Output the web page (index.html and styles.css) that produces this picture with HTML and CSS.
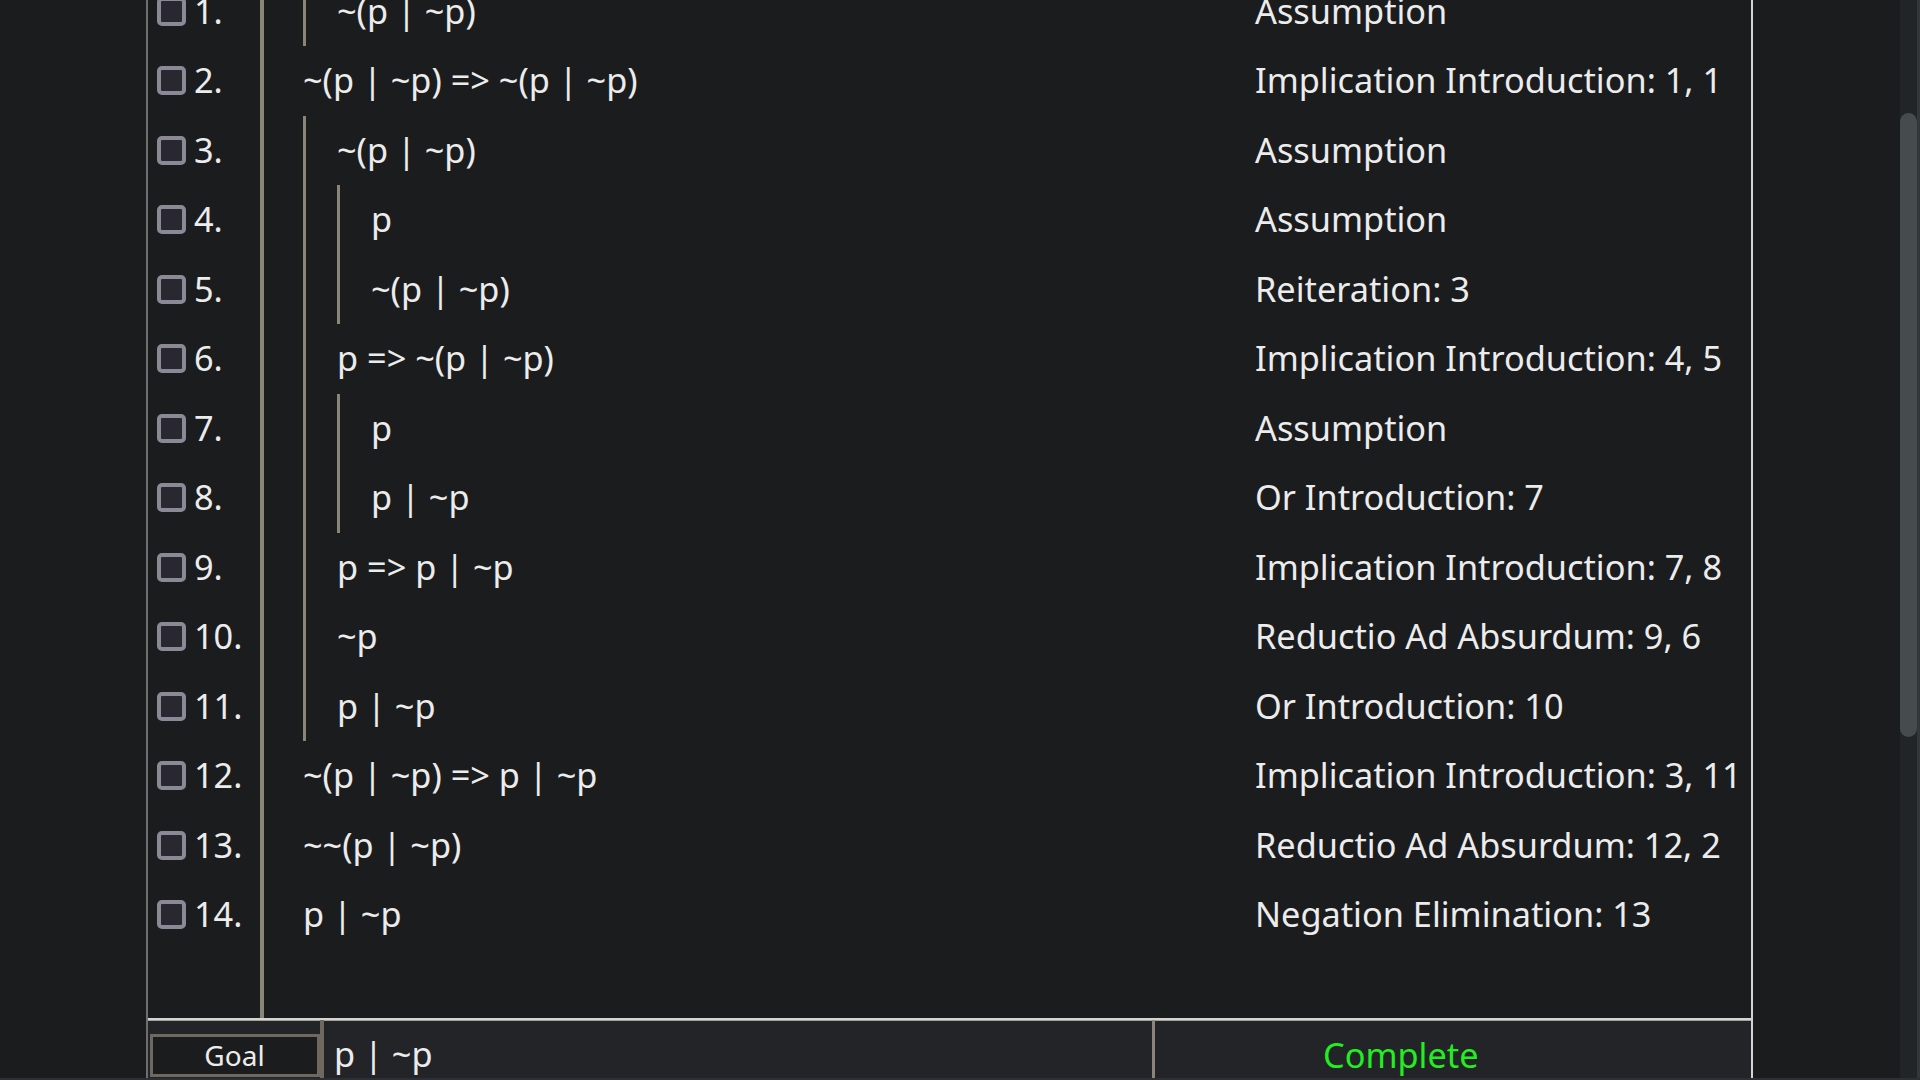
FILE: index.html
```html
<!DOCTYPE html>
<html lang="en">
<head>
<meta charset="utf-8">
<title>Proof</title>
<link rel="stylesheet" href="styles.css">
</head>
<body>
<div class="window">
  <div class="main">
    <div class="gutter"></div>
    <div class="panel">
      <div class="proof">
        <div class="row first">
          <div class="num"><span class="box"></span><span class="n">1.</span></div>
          <div class="formula"><div class="sub"><span class="f">~(p | ~p)</span></div></div>
          <div class="just"><span>Assumption</span></div>
        </div>
        <div class="row">
          <div class="num"><span class="box"></span><span class="n">2.</span></div>
          <div class="formula"><span class="f">~(p | ~p) =&gt; ~(p | ~p)</span></div>
          <div class="just"><span>Implication Introduction: 1, 1</span></div>
        </div>
        <div class="row">
          <div class="num"><span class="box"></span><span class="n">3.</span></div>
          <div class="formula"><div class="sub"><span class="f">~(p | ~p)</span></div></div>
          <div class="just"><span>Assumption</span></div>
        </div>
        <div class="row">
          <div class="num"><span class="box"></span><span class="n">4.</span></div>
          <div class="formula"><div class="sub"><div class="sub"><span class="f">p</span></div></div></div>
          <div class="just"><span>Assumption</span></div>
        </div>
        <div class="row">
          <div class="num"><span class="box"></span><span class="n">5.</span></div>
          <div class="formula"><div class="sub"><div class="sub"><span class="f">~(p | ~p)</span></div></div></div>
          <div class="just"><span>Reiteration: 3</span></div>
        </div>
        <div class="row">
          <div class="num"><span class="box"></span><span class="n">6.</span></div>
          <div class="formula"><div class="sub"><span class="f">p =&gt; ~(p | ~p)</span></div></div>
          <div class="just"><span>Implication Introduction: 4, 5</span></div>
        </div>
        <div class="row">
          <div class="num"><span class="box"></span><span class="n">7.</span></div>
          <div class="formula"><div class="sub"><div class="sub"><span class="f">p</span></div></div></div>
          <div class="just"><span>Assumption</span></div>
        </div>
        <div class="row">
          <div class="num"><span class="box"></span><span class="n">8.</span></div>
          <div class="formula"><div class="sub"><div class="sub"><span class="f">p | ~p</span></div></div></div>
          <div class="just"><span>Or Introduction: 7</span></div>
        </div>
        <div class="row">
          <div class="num"><span class="box"></span><span class="n">9.</span></div>
          <div class="formula"><div class="sub"><span class="f">p =&gt; p | ~p</span></div></div>
          <div class="just"><span>Implication Introduction: 7, 8</span></div>
        </div>
        <div class="row">
          <div class="num"><span class="box"></span><span class="n">10.</span></div>
          <div class="formula"><div class="sub"><span class="f">~p</span></div></div>
          <div class="just"><span>Reductio Ad Absurdum: 9, 6</span></div>
        </div>
        <div class="row">
          <div class="num"><span class="box"></span><span class="n">11.</span></div>
          <div class="formula"><div class="sub"><span class="f">p | ~p</span></div></div>
          <div class="just"><span>Or Introduction: 10</span></div>
        </div>
        <div class="row">
          <div class="num"><span class="box"></span><span class="n">12.</span></div>
          <div class="formula"><span class="f">~(p | ~p) =&gt; p | ~p</span></div>
          <div class="just"><span>Implication Introduction: 3, 11</span></div>
        </div>
        <div class="row">
          <div class="num"><span class="box"></span><span class="n">13.</span></div>
          <div class="formula"><span class="f">~~(p | ~p)</span></div>
          <div class="just"><span>Reductio Ad Absurdum: 12, 2</span></div>
        </div>
        <div class="row">
          <div class="num"><span class="box"></span><span class="n">14.</span></div>
          <div class="formula"><span class="f">p | ~p</span></div>
          <div class="just"><span>Negation Elimination: 13</span></div>
        </div>
        <div class="row filler">
          <div class="num"></div>
          <div class="formula"></div>
          <div class="just"></div>
        </div>
      </div>
      <div class="bottom">
        <div class="goal-cell"><div class="goal-box">Goal</div></div>
        <div class="goal-formula">p | ~p</div>
        <div class="status">Complete</div>
      </div>
    </div>
    <div class="spacer"></div>
    <div class="scrollbar"><div class="thumb"></div></div>
    <div class="edge"></div>
  </div>
  <div class="strip"></div>
</div>
</body>
</html>
```

FILE: styles.css
```css
* { box-sizing: border-box; }
html, body { margin: 0; padding: 0; }
body {
  width: 1920px;
  height: 1080px;
  overflow: hidden;
  background: #1b1c1e;
  color: #ececec;
  font-family: "Noto Sans", "Open Sans", sans-serif;
  font-size: 34.3px;
}
.window {
  display: flex;
  flex-direction: column;
  height: 1080px;
}
.main {
  display: flex;
  flex: 1;
  min-height: 0;
}
.gutter { width: 146px; flex: none; }
.panel {
  width: 1607px;
  flex: none;
  display: flex;
  flex-direction: column;
  border-left: 2px solid #6e6e70;
  border-right: 2px solid #d6d4ce;
  background: #1b1c1e;
}
.proof {
  flex: 1;
  min-height: 0;
  display: flex;
  flex-direction: column;
  overflow: hidden;
}
.row {
  display: grid;
  grid-template-columns: 116px 991px 496px;
  height: 69.5px;
  flex: none;
}
.row.first { margin-top: -23.5px; }
.row.filler { flex: 1; height: auto; }
.num {
  display: flex;
  align-items: center;
  gap: 8px;
  padding-left: 9px;
  border-right: 4px solid #8b8479;
}
.box {
  width: 29px;
  height: 29px;
  flex: none;
  border: 4px solid #8b8996;
  border-radius: 5px;
  background: #29272f;
}
.n { padding-bottom: 2px; white-space: nowrap; }
.formula {
  display: flex;
  align-items: stretch;
  padding-left: 39px;
}
.sub {
  display: flex;
  align-items: stretch;
  border-left: 3px solid #8b8479;
  padding-left: 31px;
}
.f {
  align-self: center;
  padding-bottom: 2px;
  white-space: pre;
}
.just {
  display: flex;
  align-items: center;
}
.just span { padding-bottom: 2px; white-space: nowrap; }
.bottom {
  height: 60px;
  flex: none;
  display: flex;
  border-top: 2px solid #d6d4ce;
  box-shadow: inset 0 1px 0 #a3a19b;
  background: #222427;
}
.goal-cell {
  width: 176px;
  flex: none;
  padding: 14px 0 0 1.5px;
  border-right: 4px solid #6f685e;
}
.goal-box {
  width: 170px;
  height: 43px;
  border: 3px solid #6f685e;
  background: #1b1c1e;
  font-size: 28px;
  line-height: 37px;
  text-align: center;
}
.goal-formula {
  width: 831px;
  flex: none;
  padding: 10px 0 0 10px;
  border-right: 3px solid #8b8479;
  white-space: pre;
}
.status {
  flex: 1;
  padding: 11px 0 0 168px;
  color: #22ee22;
}
.spacer { flex: 1; }
.scrollbar {
  width: 17px;
  flex: none;
  background: #212527;
  padding-top: 113px;
}
.thumb {
  height: 624px;
  border-radius: 8.5px;
  background: #464b4e;
}
.edge {
  width: 3px;
  flex: none;
  background: #33363b;
}
.strip {
  height: 2px;
  flex: none;
  background: #2c2f33;
}
```
